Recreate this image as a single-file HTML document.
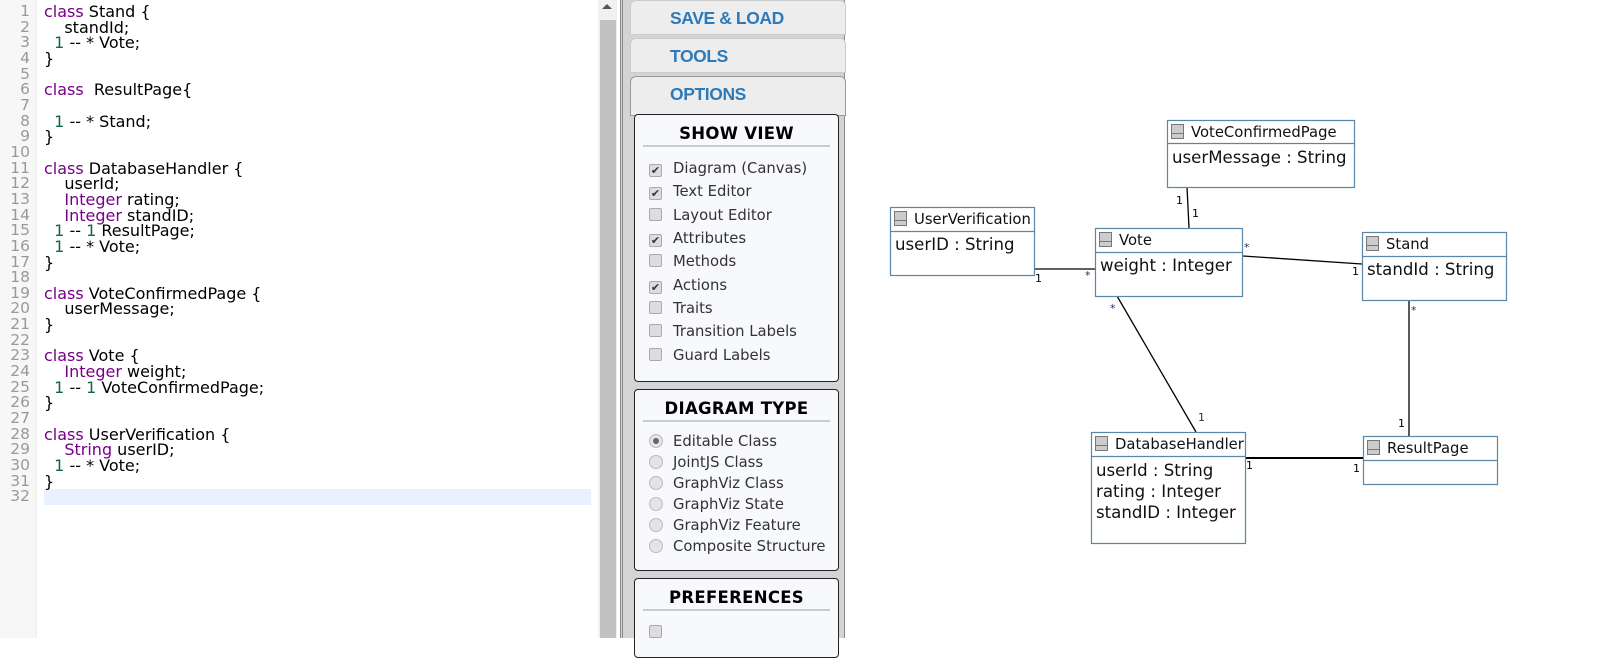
<!DOCTYPE html>
<html><head><style>
*{margin:0;padding:0;box-sizing:border-box}
body{width:1598px;height:638px;overflow:hidden;background:#fff;position:relative;font-family:"DejaVu Sans","Liberation Sans",sans-serif}
#gut{position:absolute;left:0;top:0;width:37px;height:638px;background:#f7f7f7;border-right:1px solid #eee}
.ln{position:absolute;left:0;width:30px;text-align:right;color:#999;font-size:15.5px;line-height:15.65px}
.cl{position:absolute;left:44px;font-size:16px;line-height:15.65px;color:#000;white-space:pre}
.k{color:#708}.n{color:#164}
#sb{position:absolute;left:598px;top:0;width:19px;height:638px;background:#f1f1f1}
#sbt{position:absolute;left:600px;top:20px;width:16px;height:618px;background:#c1c1c1}
#panel{position:absolute;left:620px;top:0;width:225px;height:638px;background:#d4d4d4;border-left:3px double #888;border-right:1px solid #888}
.hd{position:absolute;left:7px;width:216px;height:35px;background:#ededed;border:1px solid #ccc;border-radius:6px 6px 0 0;color:#2e7ab8;font-weight:bold;font-size:17.5px;font-family:"Liberation Sans",sans-serif;padding:7px 0 0 39px;letter-spacing:-0.4px}
.bx{position:absolute;left:11px;width:205px;background:#f8f9fd;border:1px solid #222;border-radius:4px}
.bt{text-align:center;font-weight:bold;font-size:16.5px;font-family:"DejaVu Sans",sans-serif;letter-spacing:0.3px;margin:9px 8px 0;padding-bottom:2px;border-bottom:2px solid #ccc}
.it{position:absolute;left:14px;font-size:14.8px;color:#333;white-space:nowrap}
.cb{display:inline-block;width:13px;height:13px;border:1px solid #aaa;border-radius:2px;background:#ddd;vertical-align:-1px;margin-right:11px;font-size:11px;line-height:11px;text-align:center;color:#333}
.rb{display:inline-block;width:14px;height:14px;border:1px solid #bbb;border-radius:50%;background:#e4e4e4;vertical-align:-2px;margin-right:10px;position:relative}
</style></head><body>
<div id="gut"></div>
<div class="ln" style="top:4px">1<br>2<br>3<br>4<br>5<br>6<br>7<br>8<br>9<br>10<br>11<br>12<br>13<br>14<br>15<br>16<br>17<br>18<br>19<br>20<br>21<br>22<br>23<br>24<br>25<br>26<br>27<br>28<br>29<br>30<br>31<br>32</div>
<div style="position:absolute;left:44px;top:489px;width:547px;height:16px;background:#e8f2ff"></div>
<div class="cl" style="top:4px"><span class="k">class</span> Stand {
    standId;
  <span class="n">1</span> -- * Vote;
}

<span class="k">class</span>  ResultPage{

  <span class="n">1</span> -- * Stand;
}

<span class="k">class</span> DatabaseHandler {
    userId;
    <span class="k">Integer</span> rating;
    <span class="k">Integer</span> standID;
  <span class="n">1</span> -- <span class="n">1</span> ResultPage;
  <span class="n">1</span> -- * Vote;
}

<span class="k">class</span> VoteConfirmedPage {
    userMessage;
}

<span class="k">class</span> Vote {
    <span class="k">Integer</span> weight;
  <span class="n">1</span> -- <span class="n">1</span> VoteConfirmedPage;
}

<span class="k">class</span> UserVerification {
    <span class="k">String</span> userID;
  <span class="n">1</span> -- * Vote;
}
</div>
<div id="sb"></div><div id="sbt"></div>
<div style="position:absolute;left:602px;top:4px;width:0;height:0;border-left:5px solid transparent;border-right:5px solid transparent;border-bottom:5px solid #555"></div>
<div id="panel">
<div class="hd" style="top:0">SAVE &amp; LOAD</div>
<div class="hd" style="top:38px">TOOLS</div>
<div class="hd" style="top:76px;height:40px;border-color:#999">OPTIONS</div>
<div class="bx" style="top:114px;height:268px"><div class="bt">SHOW VIEW</div>
<div class="it" style="top:45px"><span class="cb">✔</span>Diagram (Canvas)</div>
<div class="it" style="top:68px"><span class="cb">✔</span>Text Editor</div>
<div class="it" style="top:92px"><span class="cb"></span>Layout Editor</div>
<div class="it" style="top:115px"><span class="cb">✔</span>Attributes</div>
<div class="it" style="top:138px"><span class="cb"></span>Methods</div>
<div class="it" style="top:162px"><span class="cb">✔</span>Actions</div>
<div class="it" style="top:185px"><span class="cb"></span>Traits</div>
<div class="it" style="top:208px"><span class="cb"></span>Transition Labels</div>
<div class="it" style="top:232px"><span class="cb"></span>Guard Labels</div>
</div>
<div class="bx" style="top:389px;height:182px"><div class="bt">DIAGRAM TYPE</div>
<div class="it" style="top:43px"><span class="rb"><span style="position:absolute;left:3px;top:3px;width:6px;height:6px;border-radius:50%;background:#666"></span></span>Editable Class</div>
<div class="it" style="top:64px"><span class="rb"></span>JointJS Class</div>
<div class="it" style="top:85px"><span class="rb"></span>GraphViz Class</div>
<div class="it" style="top:106px"><span class="rb"></span>GraphViz State</div>
<div class="it" style="top:127px"><span class="rb"></span>GraphViz Feature</div>
<div class="it" style="top:148px"><span class="rb"></span>Composite Structure</div>
</div>
<div class="bx" style="top:578px;height:80px"><div class="bt">PREFERENCES</div>
<div class="it" style="top:45px"><span class="cb"></span></div></div>
</div>
<svg style="position:absolute;left:0;top:0" width="1598" height="638" font-family="DejaVu Sans, sans-serif">
<g stroke="#000" stroke-width="1.3" fill="none">
<line x1="1035" y1="269" x2="1095" y2="269"/>
<line x1="1187" y1="187" x2="1189" y2="228"/>
<line x1="1243" y1="256" x2="1362" y2="264"/>
<line x1="1117" y1="296" x2="1196" y2="432"/>
<line x1="1409" y1="300" x2="1409" y2="436"/>
<line x1="1246" y1="458" x2="1363" y2="458" stroke-width="2"/>
</g>
<g font-size="11" fill="#000">
<text x="1035" y="282">1</text><text x="1085" y="279" fill="#236">*</text>
<text x="1176" y="204">1</text><text x="1192" y="217">1</text>
<text x="1244" y="251" fill="#236">*</text><text x="1352" y="275">1</text>
<text x="1110" y="312" fill="#236">*</text><text x="1198" y="421" fill="#235">1</text>
<text x="1411" y="314" fill="#236">*</text><text x="1398" y="427">1</text>
<text x="1246" y="469">1</text><text x="1353" y="472">1</text>
</g>
<g fill="#fff" stroke="#5a87a5" stroke-width="1.2">
<rect x="890.5" y="207.5" width="144" height="68"/><line x1="890" y1="231.5" x2="1035" y2="231.5"/>
<rect x="1095.5" y="228.5" width="147" height="68"/><line x1="1095" y1="252.5" x2="1243" y2="252.5"/>
<rect x="1167.5" y="120.5" width="187" height="67"/><line x1="1167" y1="143.5" x2="1355" y2="143.5"/>
<rect x="1362.5" y="232.5" width="144" height="68"/><line x1="1362" y1="256.5" x2="1507" y2="256.5"/>
<rect x="1091.5" y="432.5" width="154" height="111"/><line x1="1091" y1="456.5" x2="1246" y2="456.5"/>
<rect x="1363.5" y="436.5" width="134" height="48"/><line x1="1363" y1="460.5" x2="1498" y2="460.5"/>
</g>
<g fill="#ccc" stroke="#777" stroke-width="1">
<rect x="894.5" y="211.5" width="12" height="14"/><rect x="1099.5" y="232.5" width="12" height="14"/><rect x="1171.5" y="124.5" width="12" height="14"/><rect x="1366.5" y="236.5" width="12" height="14"/><rect x="1095.5" y="436.5" width="12" height="14"/><rect x="1367.5" y="440.5" width="12" height="14"/>
</g>
<g stroke="#777" stroke-width="1">
<line x1="894" y1="220.5" x2="907" y2="220.5"/><line x1="1099" y1="241.5" x2="1112" y2="241.5"/><line x1="1171" y1="133.5" x2="1184" y2="133.5"/><line x1="1366" y1="245.5" x2="1379" y2="245.5"/><line x1="1095" y1="445.5" x2="1108" y2="445.5"/><line x1="1367" y1="449.5" x2="1380" y2="449.5"/>
</g>
<g font-size="14.8" fill="#111">
<text x="914" y="224">UserVerification</text>
<text x="1119" y="245">Vote</text>
<text x="1191" y="137">VoteConfirmedPage</text>
<text x="1386" y="249">Stand</text>
<text x="1115" y="449">DatabaseHandler</text>
<text x="1387" y="453">ResultPage</text>
</g>
<g font-size="16.6" fill="#111">
<text x="895" y="250">userID : String</text>
<text x="1100" y="271">weight : Integer</text>
<text x="1172" y="163">userMessage : String</text>
<text x="1367" y="275">standId : String</text>
<text x="1096" y="476">userId : String</text><text x="1096" y="497">rating : Integer</text><text x="1096" y="518">standID : Integer</text>
</g>
</svg>
</body></html>
